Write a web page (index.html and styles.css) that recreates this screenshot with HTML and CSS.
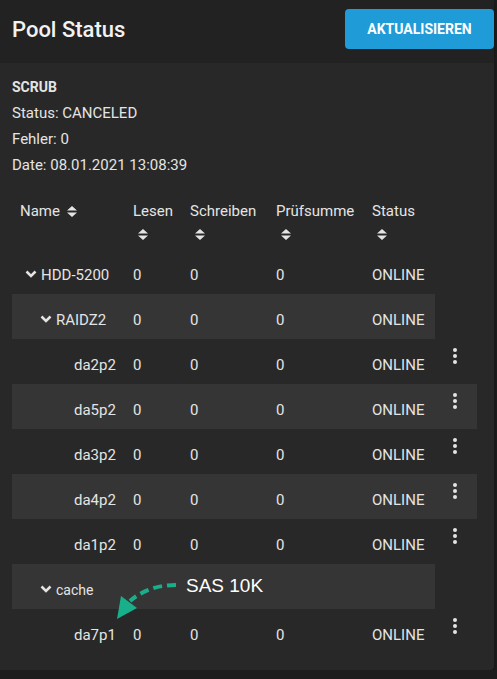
FILE: index.html
```html
<!DOCTYPE html>
<html lang="de">

<head>
    <meta charset="UTF-8">
    <meta name="viewport" content="width=device-width, initial-scale=1.0">
    <title>Pool Status</title>
    <link rel="stylesheet" href="styles.css">
</head>

<body>
    <div class="card">
        <div class="card-header">
            <h1>Pool Status</h1>
            <button class="button refresh">Aktualisieren</button>
        </div>

        <div class="scrub">
            <div class="scrub-title">SCRUB</div>
            <div>Status: CANCELED</div>
            <div>Fehler: 0</div>
            <div>Date: 08.01.2021 13:08:39</div>
        </div>

        <table class="pool-table">
            <colgroup>
                <col class="col-name">
                <col class="col-read">
                <col class="col-write">
                <col class="col-sum">
                <col class="col-status">
                <col class="col-actions">
            </colgroup>
            <thead>
                <tr>
                    <th class="th-name">Name <svg class="sort" viewBox="0 0 10 11"><path d="M5 0L10 4.5H0z M5 11L0 6.5H10z"/></svg></th>
                    <th>Lesen<svg class="sort block" viewBox="0 0 10 11"><path d="M5 0L10 4.5H0z M5 11L0 6.5H10z"/></svg></th>
                    <th>Schreiben<svg class="sort block" viewBox="0 0 10 11"><path d="M5 0L10 4.5H0z M5 11L0 6.5H10z"/></svg></th>
                    <th>Prüfsumme<svg class="sort block" viewBox="0 0 10 11"><path d="M5 0L10 4.5H0z M5 11L0 6.5H10z"/></svg></th>
                    <th>Status<svg class="sort block" viewBox="0 0 10 11"><path d="M5 0L10 4.5H0z M5 11L0 6.5H10z"/></svg></th>
                    <th></th>
                </tr>
            </thead>
            <tbody>
                <tr>
                    <td class="name level-0"><svg class="chevron" viewBox="0 0 12 8"><path d="M1.5 1.5L6 6L10.5 1.5"/></svg>HDD-5200</td>
                    <td>0</td><td>0</td><td>0</td><td>ONLINE</td><td></td>
                </tr>
                <tr class="group">
                    <td class="name level-1"><svg class="chevron" viewBox="0 0 12 8"><path d="M1.5 1.5L6 6L10.5 1.5"/></svg>RAIDZ2</td>
                    <td>0</td><td>0</td><td>0</td><td>ONLINE</td><td class="actions"></td>
                </tr>
                <tr>
                    <td class="name disk">da2p2</td>
                    <td>0</td><td>0</td><td>0</td><td>ONLINE</td>
                    <td class="actions"><svg class="kebab" viewBox="0 0 4 16"><circle cx="2" cy="2" r="2"/><circle cx="2" cy="8" r="2"/><circle cx="2" cy="14" r="2"/></svg></td>
                </tr>
                <tr class="striped">
                    <td class="name disk">da5p2</td>
                    <td>0</td><td>0</td><td>0</td><td>ONLINE</td>
                    <td class="actions"><svg class="kebab" viewBox="0 0 4 16"><circle cx="2" cy="2" r="2"/><circle cx="2" cy="8" r="2"/><circle cx="2" cy="14" r="2"/></svg></td>
                </tr>
                <tr>
                    <td class="name disk">da3p2</td>
                    <td>0</td><td>0</td><td>0</td><td>ONLINE</td>
                    <td class="actions"><svg class="kebab" viewBox="0 0 4 16"><circle cx="2" cy="2" r="2"/><circle cx="2" cy="8" r="2"/><circle cx="2" cy="14" r="2"/></svg></td>
                </tr>
                <tr class="striped">
                    <td class="name disk">da4p2</td>
                    <td>0</td><td>0</td><td>0</td><td>ONLINE</td>
                    <td class="actions"><svg class="kebab" viewBox="0 0 4 16"><circle cx="2" cy="2" r="2"/><circle cx="2" cy="8" r="2"/><circle cx="2" cy="14" r="2"/></svg></td>
                </tr>
                <tr>
                    <td class="name disk">da1p2</td>
                    <td>0</td><td>0</td><td>0</td><td>ONLINE</td>
                    <td class="actions"><svg class="kebab" viewBox="0 0 4 16"><circle cx="2" cy="2" r="2"/><circle cx="2" cy="8" r="2"/><circle cx="2" cy="14" r="2"/></svg></td>
                </tr>
                <tr class="group">
                    <td class="name level-1 small"><svg class="chevron" viewBox="0 0 12 8"><path d="M1.5 1.5L6 6L10.5 1.5"/></svg>cache</td>
                    <td></td><td></td><td></td><td></td><td class="actions"></td>
                </tr>
                <tr>
                    <td class="name disk">da7p1</td>
                    <td>0</td><td>0</td><td>0</td><td>ONLINE</td>
                    <td class="actions"><svg class="kebab" viewBox="0 0 4 16"><circle cx="2" cy="2" r="2"/><circle cx="2" cy="8" r="2"/><circle cx="2" cy="14" r="2"/></svg></td>
                </tr>
            </tbody>
        </table>

        <!-- note pointing at the cache disk -->
        <div class="note">SAS 10K</div>
        <svg class="note-arrow" viewBox="0 0 80 50" width="80" height="50">
            <path class="note-line" d="M64 8C48 8 32 12 18 24"/>
            <path class="note-head" d="M5 42L9 19L25 31z"/>
        </svg>
    </div>
</body>

</html>
```

FILE: styles.css
```css
:root {
    --page-bg: #1d1d1d;
    --card-bg: #282828;
    --header-bg: #222222;
    --row-bg: #353535;
    --text-color: #e4e4e4;
    --title-color: #f2f2f2;
    --button-bg: #1f9bd7;
    --note-color: #17b08b;
}

body {
    margin: 0;
    background-color: var(--page-bg);
    color: var(--text-color);
    font-family: Roboto, "Noto Sans", sans-serif;
    font-size: 15px;
}

.card {
    position: relative;
    width: 494px;
    background-color: var(--card-bg);
    border-radius: 0 0 4px 0;
    padding-bottom: 16px;
    box-shadow: 0 2px 4px rgba(0, 0, 0, 0.4);
}

.card-header {
    height: 58px;
    padding: 0 0 5px 12px;
    display: flex;
    align-items: center;
    justify-content: space-between;
    background-color: var(--header-bg);
}

h1 {
    margin: 0;
    font-size: 22px;
    font-weight: 500;
    color: var(--title-color);
}

.button {
    border: none;
    border-radius: 4px;
    cursor: pointer;
    font-family: inherit;
}

.refresh {
    width: 149px;
    height: 40px;
    background-color: var(--button-bg);
    color: white;
    font-size: 14px;
    font-weight: 700;
    text-transform: uppercase;
}

.scrub {
    padding: 11px 12px 0;
    line-height: 26px;
}

.scrub-title {
    font-weight: 700;
    font-size: 14px;
}

.pool-table {
    margin: 21px 0 0 12px;
    width: 465px;
    border-collapse: collapse;
    table-layout: fixed;
}

.col-name { width: 116px; }
.col-read { width: 57px; }
.col-write { width: 86px; }
.col-sum { width: 96px; }
.col-status { width: 68px; }
.col-actions { width: 42px; }

.pool-table th {
    text-align: left;
    font-weight: 400;
    line-height: 24px;
    padding: 0 0 9px 5px;
    vertical-align: top;
}

.pool-table th.th-name {
    padding-left: 8px;
}

.sort {
    width: 10px;
    height: 11px;
    fill: var(--text-color);
    margin-left: 3px;
    vertical-align: -1px;
}

.sort.block {
    display: block;
    margin: 6px 0 0 5px;
}

.pool-table tbody tr {
    height: 45px;
}

.pool-table td {
    padding: 6px 0 0 5px;
    line-height: 20px;
    white-space: nowrap;
}

.pool-table .group td,
.pool-table .striped td {
    background-color: var(--row-bg);
}

.pool-table .group td.actions {
    background-color: transparent;
}

.name.level-0 { padding-left: 13px; }
.name.level-1 { padding-left: 28px; }
.name.disk { padding-left: 62px; }
.name.small { font-size: 14px; }

.chevron {
    width: 12px;
    height: 8px;
    margin-right: 4px;
    fill: none;
    stroke: var(--text-color);
    stroke-width: 2.5;
    vertical-align: 2px;
}

.pool-table td.actions {
    vertical-align: top;
    padding: 9px 0 0 18px;
}

.kebab {
    display: block;
    width: 4px;
    height: 16px;
    fill: var(--text-color);
}

.note {
    position: absolute;
    left: 186px;
    top: 575px;
    font-family: "Liberation Sans", Arial, sans-serif;
    font-size: 19px;
    color: #ffffff;
}

.note-arrow {
    position: absolute;
    left: 112px;
    top: 577px;
}

.note-line {
    fill: none;
    stroke: var(--note-color);
    stroke-width: 4;
    stroke-dasharray: 9 5;
}

.note-head {
    fill: var(--note-color);
}
```
